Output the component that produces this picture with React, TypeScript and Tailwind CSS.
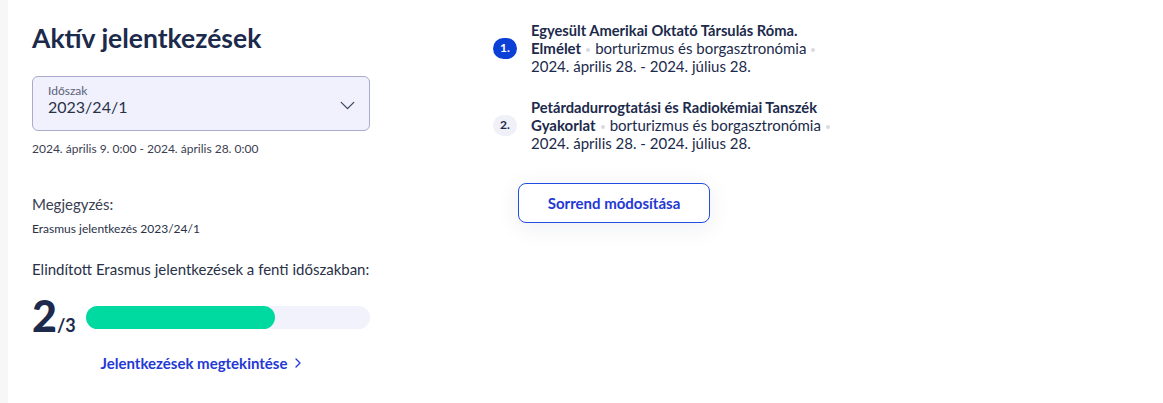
import React from "react";

const font = { fontFamily: "Lato, 'Noto Sans', sans-serif" };

function Chevron({ className }: { className?: string }) {
  return (
    <svg viewBox="0 0 16 10" fill="none" stroke="currentColor" strokeWidth="1.4" strokeLinecap="round" strokeLinejoin="round" className={className}>
      <path d="M1 1.5l7 7 7-7" />
    </svg>
  );
}

function Dot({ className }: { className?: string }) {
  return <span className={"inline-block w-[4px] h-[4px] rounded-full bg-[#d8dae3] align-middle " + (className ?? "")} />;
}

function Item({ n, active, title, kind }: { n: string; active?: boolean; title: string; kind: string }) {
  return (
    <div className="flex items-center">
      <div
        className={
          "w-6 h-[21px] rounded-full flex items-center justify-center text-[12px] font-bold mr-[14px] " +
          (active ? "bg-[#0b3fd6] text-white" : "bg-[#eff0f8] text-[#1c2a4b]")
        }
      >
        {n}
      </div>
      <div className="text-[15px] leading-[18px] text-[#1c2a4b]">
        <div className="font-bold text-[14.7px]">{title}</div>
        <div>
          <span className="font-bold">{kind}</span>
          <Dot className="mx-[5px]" />
          borturizmus és borgasztronómia
          <Dot className="ml-[5px]" />
        </div>
        <div>2024. április 28. - 2024. július 28.</div>
      </div>
    </div>
  );
}

export default function App() {
  return (
    <div className="flex w-[1163px] h-[403px] bg-white" style={font}>
      <div className="w-2 bg-[#f7f7f8]" />
      <div className="w-[338px] ml-6 pt-[22px] text-[#1c2a4b]">
        <h1 className="text-[26.5px] leading-[32px] font-bold whitespace-nowrap">Aktív jelentkezések</h1>
        <div className="mt-[22px] h-[55px] rounded-md border border-[#a9abcd] bg-[#f0f1fc] pl-[15px] pr-[14px] flex items-center">
          <div className="flex-1 pb-[6px]">
            <div className="text-[12px] leading-[13px] text-[#5b6178]">Időszak</div>
            <div className="text-[16px] leading-[20px] text-[#2a3147]">2023/24/1</div>
          </div>
          <Chevron className="w-[15px] h-[9px] text-[#3b4257] mt-1" />
        </div>
        <div className="mt-[10px] text-[12px] leading-[16px] text-[#3a4052]">
          2024. április 9. 0:00 - 2024. április 28. 0:00
        </div>
        <div className="mt-[37px] text-[15px] leading-[20px] text-[#3a4052]">Megjegyzés:</div>
        <div className="mt-[7px] text-[12px] leading-[15px] text-[#2a3147]">Erasmus jelentkezés 2023/24/1</div>
        <div className="mt-[23px] text-[15px] leading-[20px] text-[#2a3147] whitespace-nowrap">
          Elindított Erasmus jelentkezések a fenti időszakban:
        </div>
        <div className="mt-[17px] flex items-end">
          <div className="flex items-baseline w-[54px]">
            <span className="text-[43px] leading-[40px] font-black">2</span>
            <span className="text-[18px] leading-[18px] font-bold">/3</span>
          </div>
          <div className="flex-1 h-[23px] rounded-full bg-[#f1f2fb] mb-[7px]">
            <div className="h-full rounded-full bg-[#00d99f]" style={{ width: `${(2 / 3) * 100}%` }} />
          </div>
        </div>
        <div className="mt-[16px] flex justify-center items-center text-[15px] font-bold text-[#2438d4]">
          Jelentkezések megtekintése
          <svg viewBox="0 0 6 10" fill="none" stroke="currentColor" strokeWidth="1.3" strokeLinecap="round" strokeLinejoin="round" className="w-[6px] h-[10px] ml-[8px]">
            <path d="M1 1l4 4-4 4" />
          </svg>
        </div>
      </div>
      <div className="ml-[123px] pt-[21px]">
        <Item n="1." active title="Egyesült Amerikai Oktató Társulás Róma." kind="Elmélet" />
        <div className="mt-[23px]">
          <Item n="2." title="Petárdadurrogtatási és Radiokémiai Tanszék" kind="Gyakorlat" />
        </div>
        <button className="mt-[31px] ml-[25px] w-[192px] h-[40px] rounded-lg border border-[#1f4ee0] bg-white text-[15px] font-bold text-[#2438d4] shadow-[0_4px_24px_rgba(30,40,80,0.08)]">
          Sorrend módosítása
        </button>
      </div>
    </div>
  );
}
